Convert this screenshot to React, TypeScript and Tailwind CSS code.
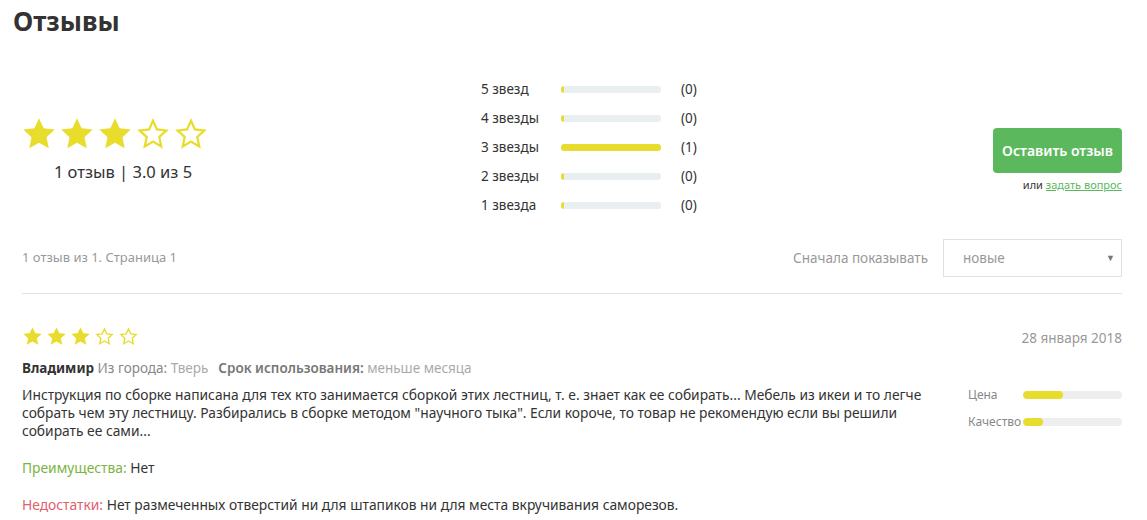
import React from "react";

const STAR = "12,1.5 15.1,8.1 22.5,9 17,14.1 18.5,21.5 12,17.8 5.5,21.5 7,14.1 1.5,9 8.9,8.1";

function Star({ filled, size }: { filled: boolean; size: number }) {
  return (
    <svg width={size} height={size} viewBox="0 0 24 24" className="shrink-0">
      {filled ? (
        <polygon points={STAR} fill="#e8dc2c" />
      ) : (
        <polygon points="12,3.2 14.6,8.9 20.9,9.7 16.2,14 17.5,20.3 12,17.1 6.5,20.3 7.8,14 3.1,9.7 9.4,8.9" fill="none" stroke="#e8dc2c" strokeWidth="1.5" strokeLinejoin="miter" />
      )}
    </svg>
  );
}

const dist = [
  { label: "5 звезд", n: 0 },
  { label: "4 звезды", n: 0 },
  { label: "3 звезды", n: 1 },
  { label: "2 звезды", n: 0 },
  { label: "1 звезда", n: 0 },
];

export default function App() {
  return (
    <div
      className="w-[1147px] h-[520px] overflow-hidden bg-white text-[#333]"
      style={{ fontFamily: '"Noto Sans", "Open Sans", sans-serif' }}
    >
      <h1 className="pl-[13px] pt-[3px] text-[26px] leading-[36px] font-bold text-[#333]">Отзывы</h1>

      <div className="pl-[22px] pr-[25px]">
        {/* summary */}
        <div className="flex items-start mt-[36px]">
          <div className="w-[202px] flex flex-col mt-[41px]">
            <div className="flex gap-[2px] ml-[-1px]">
              {[0, 1, 2, 3, 4].map((i) => (
                <Star key={i} filled={i < 3} size={36} />
              ))}
            </div>
            <div className="mt-[9px] text-center text-[16.5px] leading-[22px] text-[#333]">1 отзыв | 3.0 из 5</div>
          </div>

          <div className="ml-[257px] flex flex-col">
            {dist.map((d) => (
              <div key={d.label} className="flex items-center h-[29px] text-[13.5px] text-[#333]">
                <div className="w-[80px]">{d.label}</div>
                <div className="w-[100px] h-[7px] rounded-[3px] bg-[#e9eff1] overflow-hidden">
                  <div className="h-full rounded-[3px] bg-[#e8dc2c]" style={{ width: d.n ? "100%" : "3px" }} />
                </div>
                <div className="ml-[20px]">({d.n})</div>
              </div>
            ))}
          </div>

          <div className="ml-auto flex flex-col items-end mt-[53px]">
            <button className="w-[129px] h-[45px] rounded-[4px] bg-[#5cb85c] text-white text-[14px] font-semibold">
              Оставить отзыв
            </button>
            <div className="mt-[4px] text-[11px] leading-[16px] text-[#333]">
              или <span className="text-[#5cb85c] underline">задать вопрос</span>
            </div>
          </div>
        </div>

        {/* toolbar */}
        <div className="flex items-center mt-[19px]">
          <div className="text-[13px] text-[#999]">1 отзыв из 1. Страница 1</div>
          <div className="ml-auto text-[13.5px] text-[#999] mr-[15px]">Сначала показывать</div>
          <div className="relative w-[179px] h-[38px] border border-[#e0e0e0] flex items-center pl-[19px] text-[13.5px] text-[#999]">
            новые
            <span className="absolute right-[6px] top-[11px] text-[9px] text-[#777]">▼</span>
          </div>
        </div>

        <div className="mt-[16px] h-px bg-[#e3e3e3]" />

        {/* review */}
        <div className="mt-[31px] flex items-center justify-between">
          <div className="flex gap-[3px]">
            {[0, 1, 2, 3, 4].map((i) => (
              <Star key={i} filled={i < 3} size={21} />
            ))}
          </div>
          <div className="text-[13.5px] text-[#999] mt-[3px]">28 января 2018</div>
        </div>

        <div className="mt-[10px] text-[13.5px] leading-[20px]">
          <span className="font-bold text-[#333]">Владимир</span>{" "}
          <span className="text-[#888]">Из города:</span> <span className="text-[#aaa]">Тверь</span>
          <span className="ml-[10px] font-semibold text-[#777]">Срок использования:</span>{" "}
          <span className="text-[#aaa]">меньше месяца</span>
        </div>

        <div className="flex mt-[8px]">
          <div className="w-[920px] text-[13.8px] leading-[18px] text-[#333]">
            <p>
              Инструкция по сборке написана для тех кто занимается сборкой этих лестниц, т. е. знает как ее собирать... Мебель из икеи и то легче собрать чем эту лестницу. Разбирались в сборке методом "научного тыка". Если короче, то товар не рекомендую если вы решили собирать ее сами...
            </p>
            <p className="mt-[19px]">
              <span className="text-[#7cb342]">Преимущества:</span> Нет
            </p>
            <p className="mt-[19px]">
              <span className="text-[#e0606e]">Недостатки:</span> Нет размеченных отверстий ни для штапиков ни для места вкручивания саморезов.
            </p>
          </div>
          <div className="ml-auto w-[154px] text-[12px] text-[#888]">
            <div className="flex items-center h-[18px]">
              <div className="w-[55px]">Цена</div>
              <div className="w-[99px] h-[8px] rounded-full bg-[#eeeeee] overflow-hidden">
                <div className="h-full w-[40%] rounded-full bg-[#e8dc2c]" />
              </div>
            </div>
            <div className="flex items-center h-[18px] mt-[9px]">
              <div className="w-[55px]">Качество</div>
              <div className="w-[99px] h-[8px] rounded-full bg-[#eeeeee] overflow-hidden">
                <div className="h-full w-[20%] rounded-full bg-[#e8dc2c]" />
              </div>
            </div>
          </div>
        </div>
      </div>
    </div>
  );
}
